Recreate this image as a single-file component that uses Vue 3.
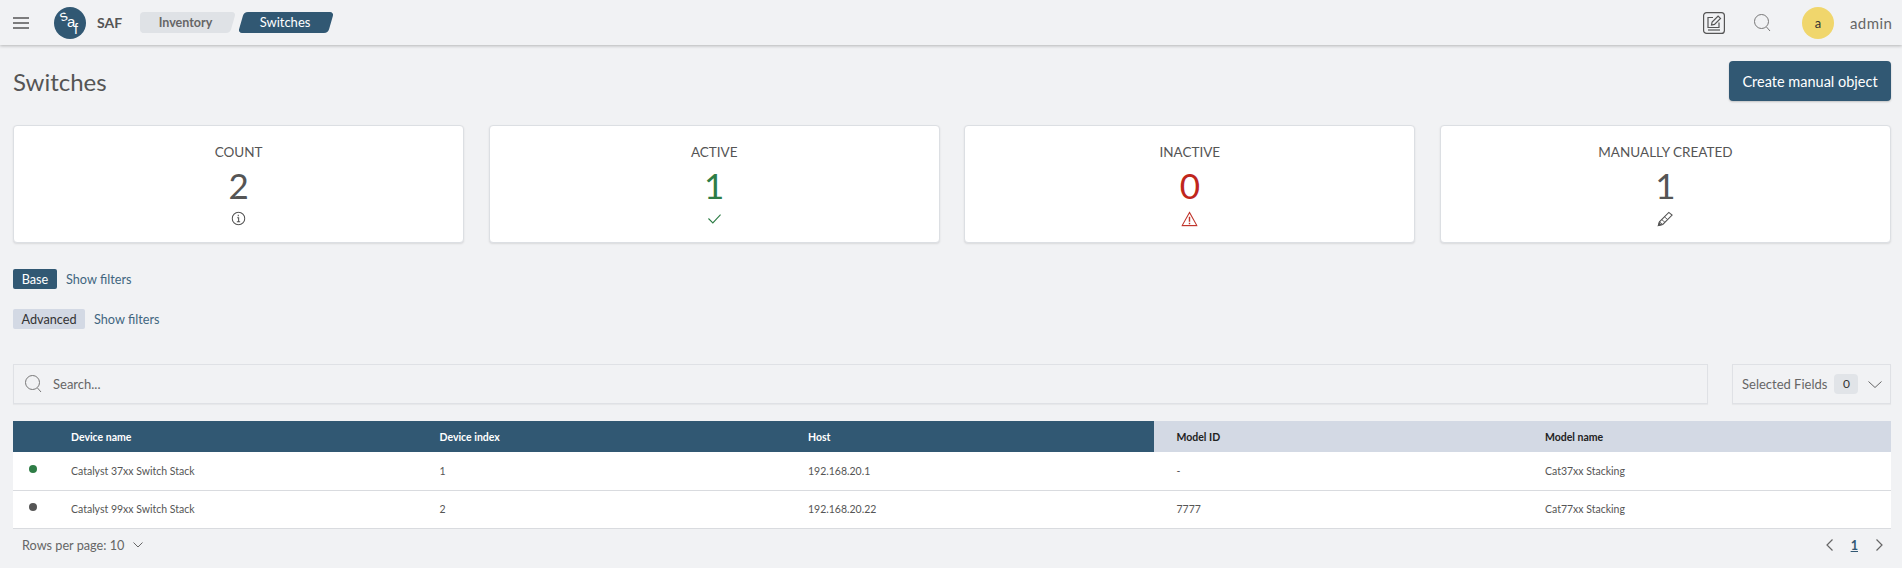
<script setup>
const cards = [
  { label: 'COUNT', value: '2', tone: 'dark', icon: 'info' },
  { label: 'ACTIVE', value: '1', tone: 'green', icon: 'check' },
  { label: 'INACTIVE', value: '0', tone: 'red', icon: 'warn' },
  { label: 'MANUALLY CREATED', value: '1', tone: 'dark', icon: 'pencil' },
]
const rows = [
  { status: 'green', name: 'Catalyst 37xx Switch Stack', index: '1', host: '192.168.20.1', modelId: '-', model: 'Cat37xx Stacking' },
  { status: 'grey', name: 'Catalyst 99xx Switch Stack', index: '2', host: '192.168.20.22', modelId: '7777', model: 'Cat77xx Stacking' },
]
</script>

<template>
  <div class="page">
    <header class="topbar">
      <svg class="burger" width="16" height="12" viewBox="0 0 16 12"><path d="M0 1h16M0 6h16M0 11h16" stroke="#555" stroke-width="1.5" fill="none"/></svg>
      <svg class="logo" width="32" height="32" viewBox="0 0 32 32">
        <circle cx="16" cy="16" r="16" fill="#315873"/>
        <text x="6" y="14" class="logo-t" font-size="15" transform="rotate(-20 9 10)">s</text>
        <text x="13" y="20" class="logo-t" font-size="15">a</text>
        <text x="20" y="27" class="logo-t" font-size="14">f</text>
      </svg>
      <span class="brand">SAF</span>
      <nav class="crumbs">
        <span class="crumb inactive"><span>Inventory</span></span>
        <span class="crumb active"><span>Switches</span></span>
      </nav>
      <div class="spacer"></div>
      <svg class="edit" width="22" height="22" viewBox="0 0 22 22" fill="none" stroke="#555" stroke-width="1.2">
        <rect x=".6" y=".6" width="20.8" height="20.800" rx="3"/>
        <path d="M10 5.500H5v10h11v-5"/>
        <path d="M5 18h12"/>
        <path d="M8.500 13l.6-3 6-6 2.400 2.400-6 6z"/>
      </svg>
      <svg class="tsearch" width="17" height="18" viewBox="0 0 17 18" fill="none" stroke="#777" stroke-width="1"><circle cx="7.500" cy="7.500" r="7"/><path d="M12.500 13l3.500 4"/></svg>
      <span class="avatar">a</span>
      <span class="user">admin</span>
    </header>

    <main class="content">
      <div class="title-row">
        <h1>Switches</h1>
        <button class="create">Create manual object</button>
      </div>

      <section class="cards">
        <article v-for="c in cards" :key="c.label" class="card">
          <div class="card-label">{{ c.label }}</div>
          <div class="card-value" :class="c.tone">{{ c.value }}</div>
          <svg v-if="c.icon === 'info'" class="card-icon" width="13" height="13" viewBox="0 0 13 13" fill="none" stroke="#555"><circle cx="6.500" cy="6.500" r="5.700"/><path d="M5.300 5.800h1.300v3.500M5 9.500h3M6.300 3.200v1.200"/></svg>
          <svg v-else-if="c.icon === 'check'" class="card-icon" width="13" height="13" viewBox="0 0 13 13" fill="none" stroke="#2e7d46"><path d="M1 6.500l4 4 7-7.500"/></svg>
          <svg v-else-if="c.icon === 'warn'" class="card-icon" width="15" height="14" viewBox="0 0 15 14" fill="none" stroke="#c0352c"><path d="M7.500 1L.8 13h13.400z"/><path d="M7.500 5v4.500M7.500 10.500v1.300" stroke-width="1.300"/></svg>
          <svg v-else class="card-icon" width="15" height="14" viewBox="0 0 15 14" fill="none" stroke="#555"><path d="M1 13l1-3.500L10.500 1l3 2.500L5 12z"/><path d="M2 9.500L5 12M4 7.500l3 2.500M6.500 5l3 2.500" stroke-width=".8"/><path d="M1 13l2.500-.8L1.700 10.800z" fill="#555"/></svg>
        </article>
      </section>

      <div class="filter first"><span class="chip base">Base</span><a>Show filters</a></div>
      <div class="filter second"><span class="chip adv">Advanced</span><a>Show filters</a></div>

      <div class="search-row">
        <label class="search">
          <svg width="17" height="18" viewBox="0 0 17 18" fill="none" stroke="#777" stroke-width="1"><circle cx="7.500" cy="7.500" r="7"/><path d="M12.500 13l3.500 4"/></svg>
          <span>Search...</span>
        </label>
        <div class="fields">
          <span>Selected Fields</span>
          <b>0</b>
          <svg width="14" height="7" viewBox="0 0 14 7" fill="none" stroke="#666"><path d="M.5.500L7 6.500 13.500.500"/></svg>
        </div>
      </div>

      <table class="grid">
        <colgroup><col class="c0"><col class="c1"><col class="c2"><col class="c3"><col class="c4"><col></colgroup>
        <thead>
          <tr>
            <th></th>
            <th>Device name</th>
            <th>Device index</th>
            <th>Host</th>
            <th class="alt">Model ID</th>
            <th class="alt">Model name</th>
          </tr>
        </thead>
        <tbody>
          <tr v-for="r in rows" :key="r.name">
            <td><i class="dot" :class="r.status"></i></td>
            <td>{{ r.name }}</td>
            <td>{{ r.index }}</td>
            <td>{{ r.host }}</td>
            <td>{{ r.modelId }}</td>
            <td>{{ r.model }}</td>
          </tr>
        </tbody>
      </table>

      <footer class="pager">
        <span class="rows">Rows per page: 10</span>
        <svg width="10" height="6" viewBox="0 0 10 6" fill="none" stroke="#666"><path d="M.5.500L5 5 9.500.500"/></svg>
        <div class="spacer"></div>
        <svg width="7" height="12" viewBox="0 0 7 12" fill="none" stroke="#666" stroke-width="1.200"><path d="M6.500.500L1 6l5.500 5.500"/></svg>
        <span class="page-no">1</span>
        <svg width="7" height="12" viewBox="0 0 7 12" fill="none" stroke="#666" stroke-width="1.200"><path d="M.5.500L6 6 .5 11.500"/></svg>
      </footer>
    </main>
  </div>
</template>

<style>
html, body { margin: 0; background: #f1f2f4; }
</style>

<style scoped>
.page {
  width: 1902px;
  height: 568px;
  overflow: hidden;
  background: #f1f2f4;
  font-family: Lato, "Open Sans", sans-serif;
  color: #555;
}
.topbar {
  height: 45px;
  display: flex;
  align-items: center;
  background: #f1f2f4;
  box-shadow: 0 1px 3px rgba(0, 0, 0, .25);
  padding: 0 13px;
  box-sizing: border-box;
}
.burger { flex: none; }
.logo { margin-left: 25px; flex: none; }
.logo-t { fill: #fff; font-family: "Liberation Sans", sans-serif; }
.brand { margin-left: 11px; font-size: 14px; font-weight: 700; color: #555; width: 28px; }
.crumbs { display: flex; margin-left: 15px; gap: 2px; }
.crumb {
  position: relative;
  width: 96px;
  height: 21px;
  line-height: 21px;
  font-size: 12.500px;
  text-align: center;
  box-sizing: border-box;
}
.crumb span { position: relative; }
.crumb::before {
  content: "";
  position: absolute;
  inset: 0 3px;
  transform: skewX(-16deg);
  border-radius: 4px;
}
.crumb.inactive { font-weight: 700; color: #666; padding-right: 5px; }
.crumb.inactive::before { background: #dfe2e6; }
.crumb.inactive::after {
  content: "";
  position: absolute;
  left: 0;
  top: 0;
  width: 40px;
  height: 21px;
  background: #dfe2e6;
  border-radius: 4px;
  z-index: 0;
}
.crumb.inactive span { z-index: 1; }
.crumb.active { color: #fff; font-size: 13px; padding-right: 2px; }
.crumb.active::before { background: #315873; }
.spacer { flex: 1; }
.edit { flex: none; margin-right: 29px; }
.tsearch { flex: none; margin-right: 31px; }
.avatar {
  width: 32px;
  height: 32px;
  border-radius: 50%;
  background: #f0d66c;
  color: #333;
  font-size: 13px;
  display: flex;
  align-items: center;
  justify-content: center;
  flex: none;
}
.user { margin-left: 16px; font-size: 15px; color: #666; letter-spacing: .4px; width: 39px; white-space: nowrap; }

.content { padding: 0 11px 0 13px; }
.title-row {
  height: 80px;
  padding-top: 16px;
  box-sizing: border-box;
  display: flex;
  justify-content: space-between;
  align-items: flex-start;
}
h1 { margin: 4px 0 0; font-size: 24px; font-weight: 400; color: #555; line-height: 34px; }
.create {
  width: 162px;
  height: 40px;
  border: 0;
  border-radius: 4px;
  background: #315873;
  color: #fff;
  font: 400 14.500px Lato, sans-serif;
  box-shadow: 0 1px 2px rgba(0,0,0,.2);
}
.cards { display: grid; grid-template-columns: repeat(4, 1fr); gap: 24.500px; }
.card {
  height: 118px;
  background: #fff;
  border: 1px solid #dcdfe3;
  border-radius: 4px;
  box-sizing: border-box;
  box-shadow: 0 1px 2px rgba(0,0,0,.1);
  display: flex;
  flex-direction: column;
  align-items: center;
}
.card-label { font-size: 13.500px; margin-top: 16px; line-height: 20px; color: #555; }
.card-value { font-size: 35px; line-height: 40px; margin-top: 3px; }
.card-value.dark { color: #555; }
.card-value.green { color: #2e7d46; }
.card-value.red { color: #c0261c; }
.card-icon { margin-top: 7px; transform: scale(1.1); }

.filter { display: flex; align-items: center; height: 20px; font-size: 12.700px; }
.filter a { color: #41667f; margin-left: 9px; }
.filter.first { margin-top: 26px; }
.filter.second { margin-top: 20px; }
.chip { height: 20px; line-height: 20px; border-radius: 2px; text-align: center; }
.chip.base { width: 44px; background: #315873; color: #fff; }
.chip.adv { width: 72px; background: #d3d9e4; color: #333; }
.search-row { display: flex; gap: 24px; margin-top: 35px; height: 40px; }
.search, .fields {
  border: 1px solid #dfe1e5;
  box-sizing: border-box;
  display: flex;
  align-items: center;
  font-size: 13px;
  color: #666;
  box-shadow: 0 1px 1px rgba(0,0,0,.04);
}
.search { flex: 1; padding-left: 11px; gap: 11px; }
.fields { width: 159px; padding-left: 9px; }
.fields b { width: 24px; height: 20px; line-height: 20px; margin-left: 7px; background: #e1e4e8; border-radius: 4px; text-align: center; font-weight: 400; font-size: 12px; color: #333; flex: none; }
.fields svg { margin-left: 10px; flex: none; }
.grid {
  margin-top: 17px;
  width: 100%;
  border-collapse: collapse;
  table-layout: fixed;
  font-size: 10.500px;
}
.c0 { width: 58px; }
.c1, .c2, .c4 { width: 368.500px; }
.c3 { width: 345.500px; }
th {
  height: 31px;
  background: #315873;
  color: #fff;
  text-align: left;
  font-weight: 700;
  padding: 0;
}
th.alt { background: #d3d9e4; color: #222; padding-left: 23px; }
td {
  height: 38px;
  padding: 0;
  background: #fff;
  color: #555;
  border-bottom: 1px solid #d9dbdf;
  box-sizing: border-box;
}
td:nth-child(5), td:nth-child(6) { padding-left: 23px; }
.dot { display: block; width: 8px; height: 8px; border-radius: 50%; margin: -4px 0 0 16px; }
.dot.green { background: #2e7d46; }
.dot.grey { background: #555; }
.pager { display: flex; align-items: center; height: 33px; padding: 0 8px 0 9px; font-size: 12.700px; color: #666; }
.pager .rows { margin-right: 9px; }
.page-no { margin: 0 18px; color: #315873; font-weight: 700; text-decoration: underline; }
</style>
